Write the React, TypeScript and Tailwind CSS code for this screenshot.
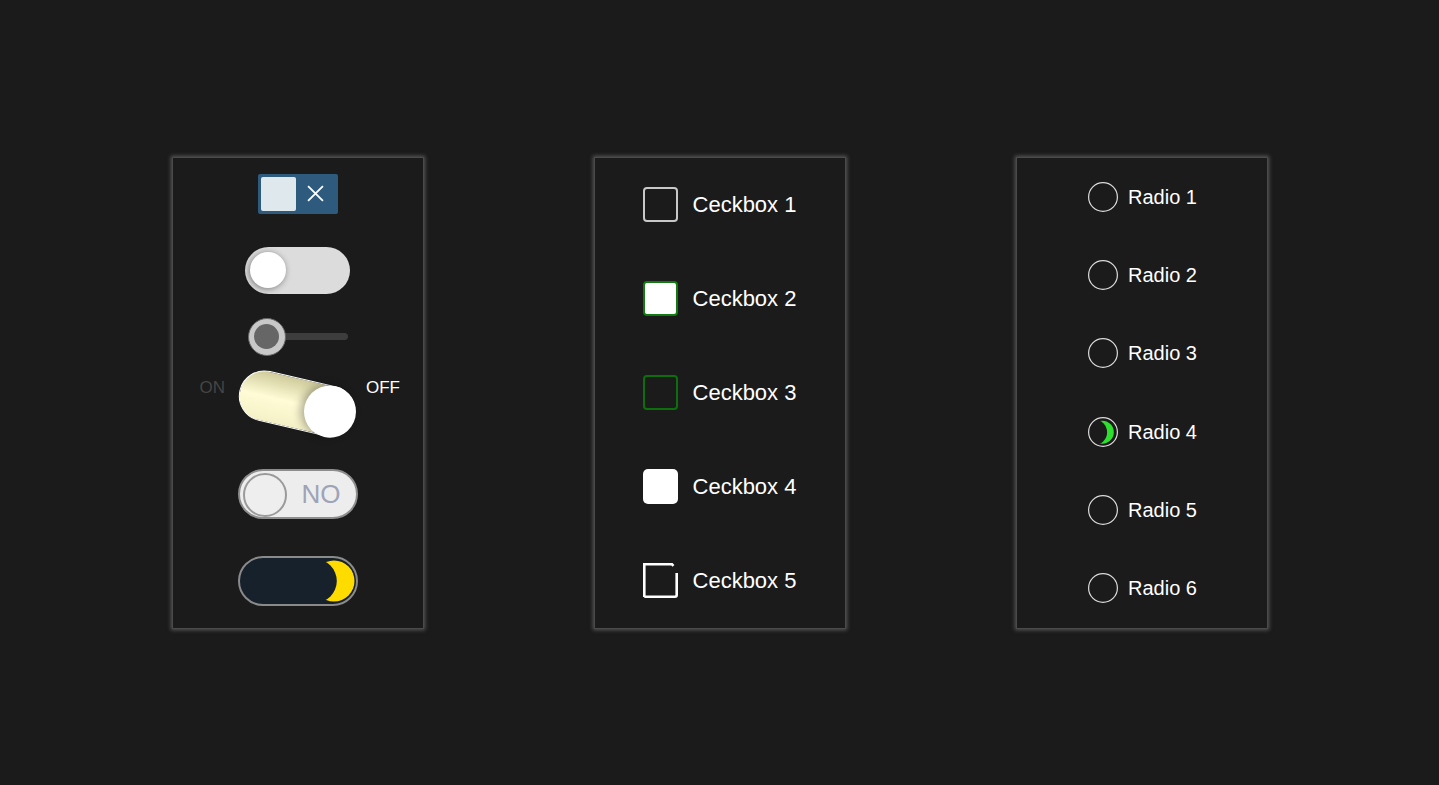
import React from 'react';

const Panel = ({ children, className = '' }: { children: React.ReactNode; className?: string }) => (
  <div
    className={`w-[252px] h-[472px] border border-[#4a4a4a] bg-[#1b1b1b] shadow-[0_0_4px_1px_#5a5a5a] ${className}`}
  >
    {children}
  </div>
);

const Checkbox = ({ label, kind }: { label: string; kind: number }) => {
  let box: React.ReactNode = null;
  if (kind === 1) box = <div className="w-[35px] h-[35px] rounded-[4px] border-2 border-[#c8c8c8]" />;
  if (kind === 2)
    box = <div className="w-[35px] h-[35px] rounded-[4px] border-2 border-[#137a13] bg-white" />;
  if (kind === 3) box = <div className="w-[35px] h-[35px] rounded-[4px] border-2 border-[#0e6e0e]" />;
  if (kind === 4) box = <div className="w-[35px] h-[35px] rounded-[5px] bg-white" />;
  if (kind === 5)
    box = (
      <svg width="35" height="35" viewBox="0 0 35 35" fill="none" stroke="white" strokeWidth="2.6">
        <path d="M1.3 34 V1.3 H29 L30.5 2.8" />
        <path d="M33.7 10 V32 Q33.7 33.7 32 33.7 H1.3" />
      </svg>
    );
  return (
    <div className="flex items-center gap-[15px]">
      {box}
      <span className="text-[22px] text-white leading-none">{label}</span>
    </div>
  );
};

const Radio = ({ label, checked }: { label: string; checked?: boolean }) => (
  <div className="flex items-center gap-[10px] pl-[2px]">
    <svg width="30" height="30" viewBox="0 0 30 30">
      <circle cx="15" cy="15" r="14.4" fill="none" stroke="#dcdcdc" strokeWidth="1.2" />
      {checked && (
        <g>
          <defs>
            <mask id="rmask">
              <rect width="30" height="30" fill="white" />
              <circle cx="6.3" cy="15.2" r="12.8" fill="black" />
            </mask>
          </defs>
          <circle cx="14.3" cy="15.2" r="11.5" fill="#2ee02e" mask="url(#rmask)" />
        </g>
      )}
    </svg>
    <span className="text-[20px] text-white leading-none">{label}</span>
  </div>
);

export default function App() {
  return (
    <div className="min-h-screen w-full bg-[#1b1b1b] flex items-center justify-center gap-[170px] font-['Liberation_Sans',Arial,sans-serif]">
      {/* toggles */}
      <Panel className="flex flex-col items-center">
        {/* square toggle */}
        <div className="mt-[16px] w-[80px] h-[40px] rounded-[2px] bg-[#2e5b7d] flex items-center p-[3px]">
          <div className="w-[35px] h-[34px] rounded-[2px] bg-[#dfe9ed]" />
          <div className="flex-1 flex items-center justify-center">
            <svg width="17" height="17" viewBox="0 0 16 16" stroke="white" strokeWidth="1.7">
              <path d="M1 1 L15 15 M15 1 L1 15" />
            </svg>
          </div>
        </div>

        {/* gray pill */}
        <div className="mt-[33px] w-[105px] h-[47px] rounded-full bg-[#dcdcdc] flex items-center pl-[5px]">
          <div className="w-[36px] h-[36px] rounded-full bg-white shadow-[-1px_1px_6px_rgba(0,0,0,0.45)]" />
        </div>

        {/* slider */}
        <div className="mt-[24px] w-[100px] h-[38px] flex items-center">
          <div className="w-[38px] h-[38px] rounded-full bg-[#c8c8c8] border border-[#666] flex items-center justify-center shrink-0 z-10">
            <div className="w-[25px] h-[25px] rounded-full bg-[#666]" />
          </div>
          <div className="-ml-[6px] flex-1 h-[7px] rounded-full bg-[#3d3d3d]" />
        </div>

        {/* tilted toggle */}
        <div className="mt-[15px] w-full flex items-start pl-[27px] gap-[12px]">
          <span className="mt-[8px] text-[17px] leading-none text-[#454545]">ON</span>
          <div className="w-[120px] h-[66px] flex items-center justify-center">
            <div className="w-[118px] h-[51px] rotate-[13deg] rounded-full border-[1.5px] border-white bg-gradient-to-b from-[#cfcb9c] via-[#fffcd6] to-[#f4f0c6] flex items-center justify-end">
              <div className="w-[52px] h-[52px] -mr-[2px] rounded-full bg-white shadow-[-4px_0_8px_rgba(0,0,0,0.3)]" />
            </div>
          </div>
          <span className="-ml-[3px] mt-[8px] text-[17px] leading-none text-white">OFF</span>
        </div>

        {/* NO toggle */}
        <div className="mt-[32px] w-[120px] h-[50px] rounded-full bg-[#ededed] border-[2.5px] border-[#8d8d8d] flex items-center pl-[3px]">
          <div className="w-[44px] h-[44px] mt-[3px] rounded-full border-2 border-[#9a9a9a] bg-[#eeeeee]" />
          <span className="ml-[15px] text-[26px] leading-none text-[#9ea3b8]">NO</span>
        </div>

        {/* dark toggle */}
        <div className="mt-[37px] w-[120px] h-[50px] rounded-full bg-[#17212b] border-2 border-[#8a8a8a] flex items-center justify-end pr-[1px]">
          <svg width="42" height="42" viewBox="0 0 42 42">
            <defs>
              <mask id="moon">
                <rect width="42" height="42" fill="white" />
                <circle cx="2" cy="21" r="21.8" fill="black" />
              </mask>
            </defs>
            <circle cx="21" cy="21" r="20.5" fill="#ffdc00" mask="url(#moon)" />
          </svg>
        </div>
      </Panel>

      {/* checkboxes */}
      <Panel className="flex flex-col items-center justify-around">
        <Checkbox label="Ceckbox 1" kind={1} />
        <Checkbox label="Ceckbox 2" kind={2} />
        <Checkbox label="Ceckbox 3" kind={3} />
        <Checkbox label="Ceckbox 4" kind={4} />
        <Checkbox label="Ceckbox 5" kind={5} />
      </Panel>

      {/* radios */}
      <Panel className="flex flex-col items-center justify-around">
        <Radio label="Radio 1" />
        <Radio label="Radio 2" />
        <Radio label="Radio 3" />
        <Radio label="Radio 4" checked />
        <Radio label="Radio 5" />
        <Radio label="Radio 6" />
      </Panel>
    </div>
  );
}
